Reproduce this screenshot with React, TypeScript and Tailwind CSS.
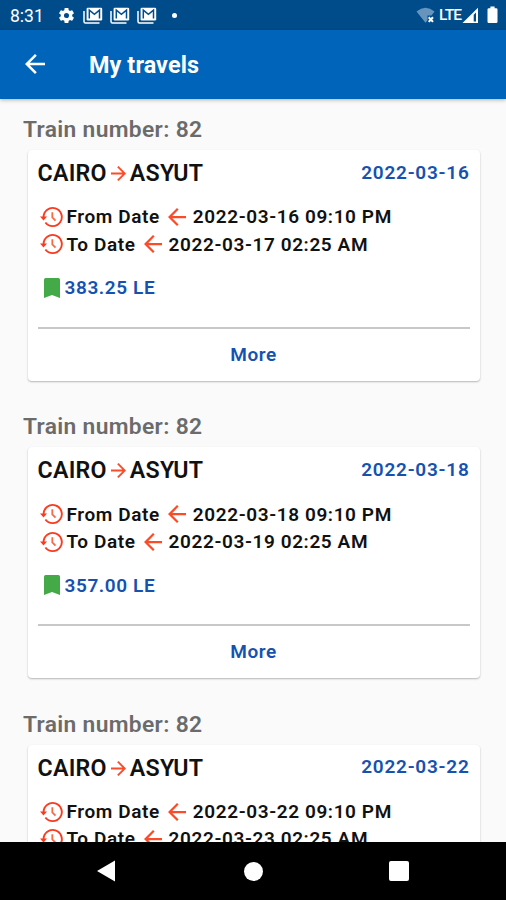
type Travel = {
  train: number;
  from: string;
  to: string;
  date: string;
  departure: string;
  arrival: string;
  price: string;
};

const TRAVELS: Travel[] = [
  {
    train: 82,
    from: "CAIRO",
    to: "ASYUT",
    date: "2022-03-16",
    departure: "2022-03-16 09:10 PM",
    arrival: "2022-03-17 02:25 AM",
    price: "383.25 LE",
  },
  {
    train: 82,
    from: "CAIRO",
    to: "ASYUT",
    date: "2022-03-18",
    departure: "2022-03-18 09:10 PM",
    arrival: "2022-03-19 02:25 AM",
    price: "357.00 LE",
  },
  {
    train: 82,
    from: "CAIRO",
    to: "ASYUT",
    date: "2022-03-22",
    departure: "2022-03-22 09:10 PM",
    arrival: "2022-03-23 02:25 AM",
    price: "357.00 LE",
  },
];

function GearIcon() {
  return (
    <svg viewBox="0 0 24 24" className="ml-[13px] size-[19px] shrink-0" fill="currentColor">
      <path d="M19.14 12.94c.04-.3.06-.61.06-.94 0-.32-.02-.64-.07-.94l2.03-1.58c.18-.14.23-.41.12-.61l-1.92-3.32c-.12-.22-.37-.29-.59-.22l-2.39.96c-.5-.38-1.03-.7-1.62-.94L14.4 2.81c-.04-.24-.24-.41-.48-.41h-3.84c-.24 0-.43.17-.47.41L9.25 5.35c-.59.24-1.13.57-1.62.94l-2.39-.96c-.22-.08-.47 0-.59.22L2.74 8.87c-.12.21-.08.47.12.61l2.03 1.58c-.05.3-.09.63-.09.94s.02.64.07.94l-2.03 1.58c-.18.14-.23.41-.12.61l1.92 3.32c.12.22.37.29.59.22l2.39-.96c.5.38 1.03.7 1.62.94l.36 2.54c.05.24.24.41.48.41h3.84c.24 0 .44-.17.47-.41l.36-2.54c.59-.24 1.13-.56 1.62-.94l2.39.96c.22.08.47 0 .59-.22l1.92-3.32c.12-.22.07-.47-.12-.61l-2.01-1.58zM12 15.2a3.2 3.2 0 1 1 0-6.4 3.2 3.2 0 0 1 0 6.4z" />
    </svg>
  );
}

function MailStackIcon() {
  return (
    <svg viewBox="0 0 20 17" className="h-[17px] w-5 shrink-0" fill="none">
      <path d="M1 4v10.5Q1 16 2.5 16H16.5" stroke="currentColor" strokeWidth="1.5" />
      <rect x="3.6" y="0.8" width="15.6" height="12.7" rx="1.2" fill="currentColor" />
      <path d="M6.3 11.5V3.2l5.1 4.2 5.1-4.2v8.3" stroke="#034d8c" strokeWidth="1.5" />
    </svg>
  );
}

function WifiIcon() {
  return (
    <svg viewBox="0 0 20 17" className="h-[17px] w-5 shrink-0">
      <path d="M0.5 4.5Q9.5-2.8 18.5 4.5L15.5 8.4H11.5V13.2L9.5 15.8Z" fill="#6694bd" />
      <path d="M12.7 10.2l4.3 4.7M17 10.2l-4.3 4.7" stroke="white" strokeWidth="2" />
    </svg>
  );
}

function SignalIcon() {
  return (
    <svg viewBox="0 0 17 17" className="ml-px h-[17px] w-[17px] shrink-0">
      <path fillRule="evenodd" d="M0.5 16L16 0.8V16ZM11.7 7.7V14.5H14V5.4Z" fill="white" />
    </svg>
  );
}

function BatteryIcon() {
  return (
    <svg viewBox="0 0 11 18" className="ml-2 h-[18px] w-[11px] shrink-0" fill="white">
      <path d="M3.4 0.5h4.2v1.7h1.6q1.3 0 1.3 1.3v12.2q0 1.3-1.3 1.3H1.8Q0.5 17 0.5 15.7V3.5q0-1.3 1.3-1.3h1.6z" />
    </svg>
  );
}

function ArrowIcon({ className }: { className: string }) {
  return (
    <svg viewBox="4 4 16 16" className={className} fill="currentColor">
      <path d="M20 11H7.83l5.59-5.59L12 4l-8 8 8 8 1.41-1.41L7.83 13H20v-2z" />
    </svg>
  );
}

function HistoryIcon() {
  return (
    <svg viewBox="0 0 23 22" className="h-[22px] w-[23px] shrink-0" fill="none" stroke="#fb3a1e" strokeWidth="1.9">
      <path d="M3.6 11.2A9.1 9.1 0 1 1 5.4 16.5" />
      <path d="M12.3 6.3v5.2l3.2 3.2" stroke="#fc6a45" strokeWidth="1.8" />
      <path d="M0 10.5h7L3.5 14.6z" fill="#fb3a1e" stroke="none" />
    </svg>
  );
}

function BookmarkIcon() {
  return (
    <svg viewBox="0 0 16 20" className="h-5 w-4 shrink-0" fill="#43aa47">
      <path d="M1.7 0h12.6Q16 0 16 1.7V20l-8-3-8 3V1.7Q0 0 1.7 0z" />
    </svg>
  );
}

function StatusBar() {
  return (
    <div className="flex h-[30px] shrink-0 items-center bg-[#004c8a] pl-[10px] pr-2 font-normal text-white">
      <span className="w-[34px] pt-[2px] text-[17.5px]">8:31</span>
      <GearIcon />
      <div className="ml-[7px] flex gap-[7px]">
        <MailStackIcon />
        <MailStackIcon />
        <MailStackIcon />
      </div>
      <span className="ml-[15px] size-[5px] rounded-full bg-white" />
      <div className="ml-auto flex items-center">
        <WifiIcon />
        <span className="ml-[3px] w-[22px] pt-px text-[15.5px] font-medium tracking-[-0.8px]">LTE</span>
        <SignalIcon />
        <BatteryIcon />
      </div>
    </div>
  );
}

function DateRow({ label, value }: { label: string; value: string }) {
  return (
    <div className="flex h-[27.3px] items-center pl-[2px] text-[19px] tracking-[0.6px]">
      <HistoryIcon />
      <span className="ml-1 pt-px">{label}</span>
      <ArrowIcon className="ml-[8px] mr-[7px] size-[18px] shrink-0 text-[#fb4b28]" />
      <span className="pt-px">{value}</span>
    </div>
  );
}

function TravelCard({ travel }: { travel: Travel }) {
  return (
    <section className="h-[297.3px] shrink-0">
      <h2 className="ml-[23px] h-[34px] text-[22.8px] leading-7 font-semibold tracking-[0.33px] text-[#6b6b6b]">
        Train number: {travel.train}
      </h2>
      <div className="ml-7 mr-[26px] flex h-[231px] flex-col rounded bg-white pl-[9.5px] pr-[10.5px] shadow-[0_1px_2px_rgba(0,0,0,0.28)]">
        <div className="flex h-[46px] items-center justify-between">
          <div className="flex items-center pt-px text-[23.2px] tracking-[0.25px]">
            <span>{travel.from}</span>
            <ArrowIcon className="mx-[4px] size-[15px] shrink-0 rotate-180 text-[#fb4b28]" />
            <span>{travel.to}</span>
          </div>
          <span className="text-[19px] tracking-[0.75px] text-[#1552b0]">{travel.date}</span>
        </div>
        <div className="mt-[7.5px]">
          <DateRow label="From Date" value={travel.departure} />
          <DateRow label="To Date" value={travel.arrival} />
        </div>
        <div className="mt-[15px] flex h-[30px] items-center pl-[6px]">
          <BookmarkIcon />
          <span className="ml-[5px] pt-px text-[19px] tracking-[0.6px] text-[#1552b0]">{travel.price}</span>
        </div>
        <div className="mt-6 h-[1.5px] shrink-0 bg-[#c8c8c8]" />
        <button className="flex flex-1 items-center justify-center pt-px text-[19px] tracking-[0.5px] text-[#1552b0]">
          More
        </button>
      </div>
    </section>
  );
}

function NavigationBar() {
  return (
    <nav className="flex h-[58px] shrink-0 items-center bg-black pl-24">
      <svg viewBox="0 0 20 22" className="h-[22px] w-5" fill="white">
        <path d="M19 0.5v21L1 11z" />
      </svg>
      <span className="ml-32 size-[19px] rounded-full bg-white" />
      <span className="ml-[126px] size-5 rounded-[2px] bg-white" />
    </nav>
  );
}

export default function App() {
  return (
    <div className="flex h-[900px] w-[506px] flex-col overflow-hidden bg-[#fafafa] font-['Roboto',sans-serif] font-semibold text-[#111111]">
      <StatusBar />
      <header className="z-10 flex h-[68.5px] shrink-0 items-center bg-[#0064bb] pl-[25px] text-white shadow-[0_1px_4px_rgba(0,0,0,0.3)]">
        <ArrowIcon className="size-5" />
        <h1 className="ml-[44px] pt-[2px] text-[23.4px] font-bold tracking-[0.1px]">My travels</h1>
      </header>
      <main className="flex min-h-0 flex-1 flex-col overflow-hidden pt-[17.5px]">
        {TRAVELS.map((travel) => (
          <TravelCard key={travel.date} travel={travel} />
        ))}
      </main>
      <NavigationBar />
    </div>
  );
}
